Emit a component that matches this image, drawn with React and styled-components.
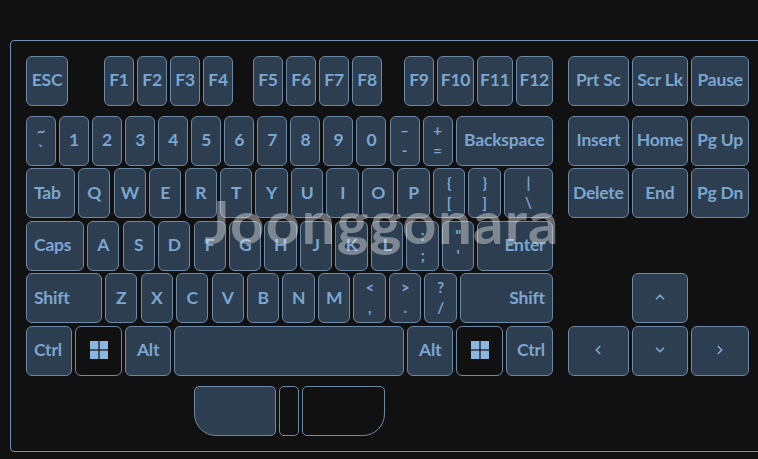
import styled, { createGlobalStyle } from 'styled-components';
import { ChevronUp, ChevronDown, ChevronLeft, ChevronRight } from 'lucide-react';

const GlobalStyle = createGlobalStyle`
    html, body {
        margin: 0;
        height: 100%;
        overflow: hidden;
        background: #111111;
    }
`;

const Page = styled.div`
    width: 758px;
    height: 459px;
    overflow: hidden;
    padding: 40px 0 0 10px;
    box-sizing: border-box;
    font-family: "Lato", "Liberation Sans", sans-serif;
`;

const Frame = styled.div`
    position: relative;
    width: 780px;
    height: 412px;
    box-sizing: border-box;
    padding: 15px 0 0 15px;
    border: 1px solid #7193b3;
    border-radius: 4px;
    display: flex;
    flex-direction: column;
    gap: 2.8px;
`;

const Row = styled.div`
    display: flex;
    gap: 3.05px;
    height: 49.7px;
    flex: none;
    margin-bottom: ${props => props.$after || 0}px;
`;

const Spacer = styled.div`
    flex: none;
    width: ${props => props.$w}px;
`;

const justify = { start: 'flex-start', end: 'flex-end' };

const Key = styled.div`
    flex: none;
    box-sizing: border-box;
    width: ${props => props.$w}px;
    height: 100%;
    display: flex;
    align-items: center;
    justify-content: ${props => justify[props.$align] || 'center'};
    padding: 0 7px 2px;
    background: ${props => props.$dark ? '#111111' : '#2c3e50'};
    border: 1px solid #6c89a6;
    border-radius: 6px;
    color: #7ba6d0;
    font-size: 17.5px;
    font-weight: 700;
    letter-spacing: -0.2px;
    white-space: nowrap;
`;

const DoubleKey = styled(Key)`
    flex-direction: column;
    justify-content: space-between;
    padding: 4px 0 6px;
    font-size: 15px;
    line-height: 18px;
`;

const WinIcon = styled.svg`
    width: 18px;
    height: 18px;
    fill: #8ab6df;
`;

const TouchRow = styled.div`
    display: flex;
    gap: 3px;
    height: 50px;
    margin-left: 168px;
`;

const TouchButton = styled.div`
    box-sizing: border-box;
    width: ${props => props.$w}px;
    height: 100%;
    border: 1px solid #6c89a6;
    border-radius: ${props => props.$radius};
    background: ${props => props.$filled ? '#2c3e50' : 'transparent'};
`;

const Watermark = styled.div`
    position: absolute;
    left: 193px;
    top: 144px;
    font-size: 60px;
    line-height: 72px;
    font-weight: 700;
    color: rgba(255, 255, 255, 0.38);
    letter-spacing: 1.3px;
    white-space: nowrap;
    pointer-events: none;
`;

const Windows = () => (
    <WinIcon viewBox="0 0 18 18">
        <rect x="0" y="0" width="8.4" height="8.4" />
        <rect x="9.6" y="0" width="8.4" height="8.4" />
        <rect x="0" y="9.6" width="8.4" height="8.4" />
        <rect x="9.6" y="9.6" width="8.4" height="8.4" />
    </WinIcon>
);

const Double = ({ top, bottom, w }) => (
    <DoubleKey $w={w}>
        <span>{top}</span>
        <span>{bottom}</span>
    </DoubleKey>
);

const numbers = ['1', '2', '3', '4', '5', '6', '7', '8', '9', '0'];
const qwerty = ['Q', 'W', 'E', 'R', 'T', 'Y', 'U', 'I', 'O', 'P'];
const asdf = ['A', 'S', 'D', 'F', 'G', 'H', 'J', 'K', 'L'];
const zxcv = ['Z', 'X', 'C', 'V', 'B', 'N', 'M'];

const arrowProps = { size: 14, strokeWidth: 3 };

const App = () => {
    return (
        <Page>
            <GlobalStyle />
            <Frame>
                <Row $after={7.4}>
                    <Key $w={42}>ESC</Key>
                    <Spacer $w={29.9} />
                    {['F1', 'F2', 'F3', 'F4'].map(k => <Key key={k} $w={30}>{k}</Key>)}
                    <Spacer $w={13.75} />
                    {['F5', 'F6', 'F7', 'F8'].map(k => <Key key={k} $w={30}>{k}</Key>)}
                    <Spacer $w={15.75} />
                    <Key $w={30}>F9</Key>
                    <Key $w={37}>F10</Key>
                    <Key $w={35.5}>F11</Key>
                    <Key $w={37.35}>F12</Key>
                    <Spacer $w={8.9} />
                    <Key $w={61}>Prt Sc</Key>
                    <Key $w={56}>Scr Lk</Key>
                    <Key $w={58.3}>Pause</Key>
                </Row>
                <Row>
                    <Double w={30} top="~" bottom="`" />
                    {numbers.map(k => <Key key={k} $w={30}>{k}</Key>)}
                    <Double w={30} top="–" bottom="-" />
                    <Double w={30} top="+" bottom="=" />
                    <Key $w={97.35}>Backspace</Key>
                    <Spacer $w={8.9} />
                    <Key $w={61}>Insert</Key>
                    <Key $w={56}>Home</Key>
                    <Key $w={58.3}>Pg Up</Key>
                </Row>
                <Row>
                    <Key $w={49} $align="start">Tab</Key>
                    {qwerty.map(k => <Key key={k} $w={32.45}>{k}</Key>)}
                    <Double w={32.45} top="{" bottom="[" />
                    <Double w={32.45} top="}" bottom="]" />
                    <Double w={49} top="|" bottom="\" />
                    <Spacer $w={8.9} />
                    <Key $w={61}>Delete</Key>
                    <Key $w={56}>End</Key>
                    <Key $w={58.3}>Pg Dn</Key>
                </Row>
                <Row>
                    <Key $w={58} $align="start">Caps</Key>
                    {asdf.map(k => <Key key={k} $w={32.45}>{k}</Key>)}
                    <Double w={32.45} top=":" bottom=";" />
                    <Double w={32.45} top={'"'} bottom="'" />
                    <Key $w={76} $align="end">Enter</Key>
                </Row>
                <Row>
                    <Key $w={76} $align="start">Shift</Key>
                    {zxcv.map(k => <Key key={k} $w={32.45}>{k}</Key>)}
                    <Double w={32.45} top="<" bottom="," />
                    <Double w={32.45} top=">" bottom="." />
                    <Double w={32.45} top="?" bottom="/" />
                    <Key $w={93} $align="end">Shift</Key>
                    <Spacer $w={72.9} />
                    <Key $w={56}><ChevronUp {...arrowProps} /></Key>
                </Row>
                <Row $after={8}>
                    <Key $w={46} $align="start">Ctrl</Key>
                    <Key $w={47} $dark><Windows /></Key>
                    <Key $w={46}>Alt</Key>
                    <Key $w={230} />
                    <Key $w={46}>Alt</Key>
                    <Key $w={47} $dark><Windows /></Key>
                    <Key $w={46.7} $align="end">Ctrl</Key>
                    <Spacer $w={8.9} />
                    <Key $w={61}><ChevronLeft {...arrowProps} /></Key>
                    <Key $w={56}><ChevronDown {...arrowProps} /></Key>
                    <Key $w={58.3}><ChevronRight {...arrowProps} /></Key>
                </Row>
                <TouchRow>
                    <TouchButton $w={82} $filled $radius="5px 5px 5px 22px" />
                    <TouchButton $w={20} $radius="5px" />
                    <TouchButton $w={83} $radius="5px 5px 22px 5px" />
                </TouchRow>
                <Watermark>Joonggonara</Watermark>
            </Frame>
        </Page>
    );
};

export default App;
